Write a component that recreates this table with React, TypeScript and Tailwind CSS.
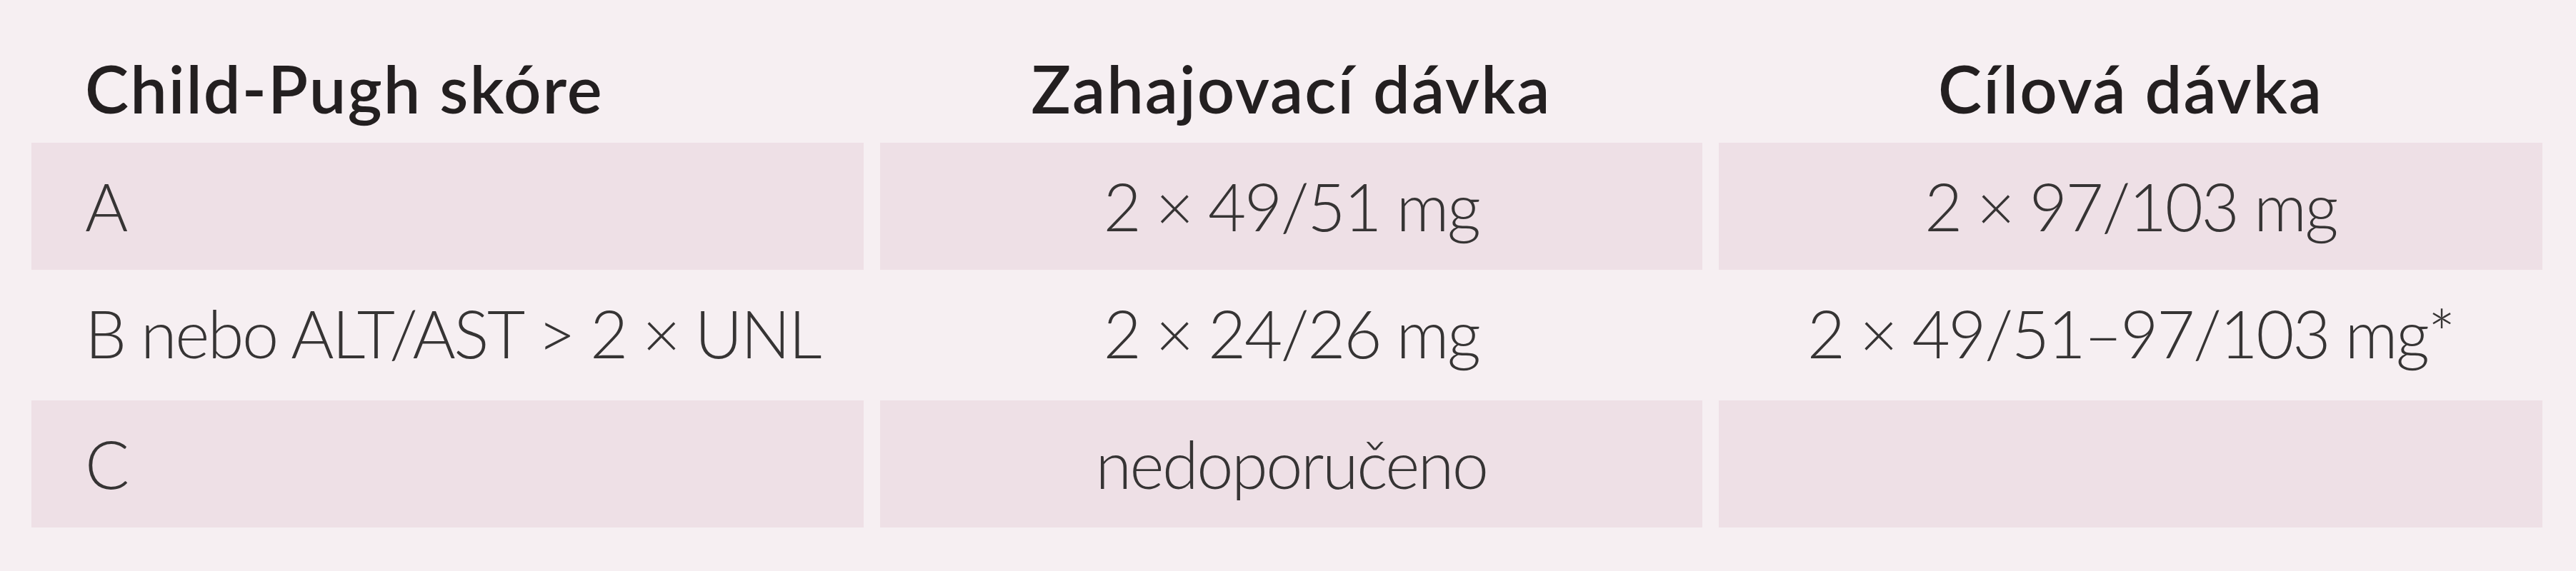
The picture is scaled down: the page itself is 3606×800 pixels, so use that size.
const rows = [
  { score: "A", start: "2 × 49/51 mg", target: "2 × 97/103 mg", shaded: true },
  { score: "B nebo ALT/AST > 2 × UNL", start: "2 × 24/26 mg", target: "2 × 49/51–97/103 mg*", shaded: false },
  { score: "C", start: "nedoporučeno", target: "", shaded: true },
];

export default function App() {
  return (
    <div className="h-[800px] w-[3606px] bg-[#f6eff2] pl-[44px] font-['Lato',sans-serif] text-[92px]">
      <div className="grid grid-cols-[1165px_1151px_1153px] gap-x-[23px]">
        <div className="flex h-[200px] items-end pb-[30px] pl-[75px] font-semibold leading-none tracking-[2px] text-[#231f20]">
          Child-Pugh skóre
        </div>
        <div className="flex h-[200px] items-end justify-center pb-[30px] font-semibold leading-none tracking-[2px] text-[#231f20]">
          Zahajovací dávka
        </div>
        <div className="flex h-[200px] items-end justify-center pb-[30px] font-semibold leading-none tracking-[2px] text-[#231f20]">
          Cílová dávka
        </div>

        {rows.map((r, i) => (
          <div key={i} className="contents">
            <div
              className={`flex h-[178px] items-center pl-[75px] font-light leading-none tracking-[-2.5px] text-[#363434] ${
                r.shaded ? "bg-[#eee0e6]" : ""
              } ${i === 2 ? "mt-[5px]" : ""}`}
            >
              {r.score}
            </div>
            <div
              className={`flex h-[178px] items-center justify-center font-light leading-none tracking-[-2.5px] text-[#363434] ${
                r.shaded ? "bg-[#eee0e6]" : ""
              } ${i === 2 ? "mt-[5px]" : ""}`}
            >
              {r.start}
            </div>
            <div
              className={`flex h-[178px] items-center justify-center font-light leading-none tracking-[-2.5px] text-[#363434] ${
                r.shaded ? "bg-[#eee0e6]" : ""
              } ${i === 2 ? "mt-[5px]" : ""}`}
            >
              {r.target}
            </div>
          </div>
        ))}
      </div>
    </div>
  );
}
